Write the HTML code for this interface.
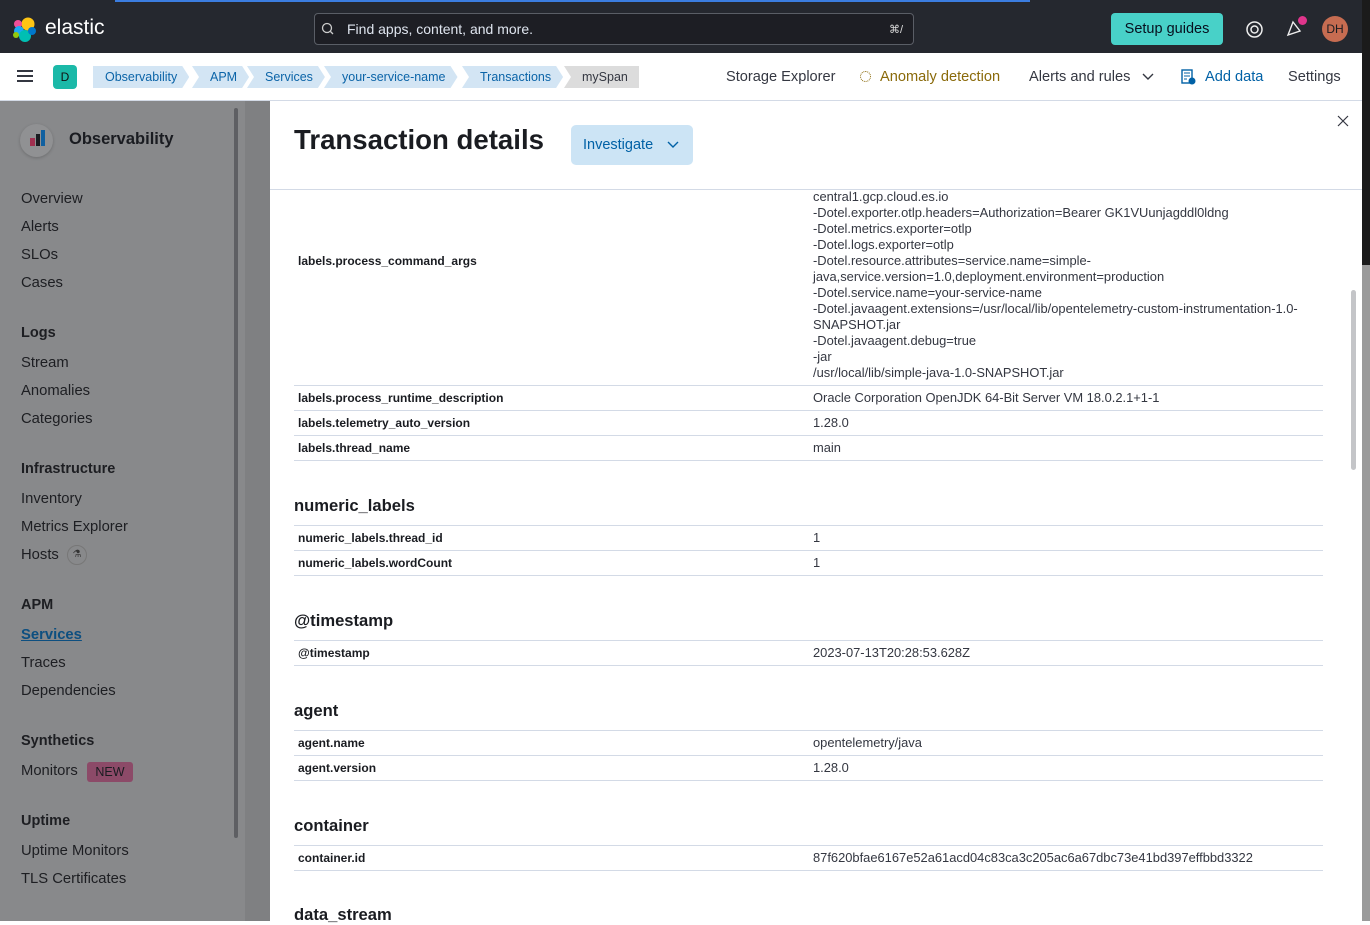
<!DOCTYPE html>
<html><head><meta charset="utf-8"><style>
*{box-sizing:border-box;margin:0;padding:0}
body{width:1370px;height:921px;overflow:hidden;position:relative;font-family:"Liberation Sans",sans-serif;background:#fff}
.a{position:absolute;white-space:nowrap}
.top{left:0;top:0;width:1362px;height:53px;background:#25282f}
.bc{position:absolute;top:66px;height:22px;line-height:22px;font-size:12.5px;color:#0b64a8;background:#d3e5f4;padding:0 12px 0 18px;clip-path:polygon(0 0,calc(100% - 7px) 0,100% 50%,calc(100% - 7px) 100%,0 100%,7px 50%)}
.side{left:0;top:101px;width:245px;height:820px;background:#88898b}
.si{position:absolute;left:21px;font-size:14.8px;color:#1d1e22}
.sh{position:absolute;left:21px;font-size:14.5px;font-weight:bold;color:#1d1e22}
.k{position:absolute;left:298px;font-size:12px;font-weight:bold;color:#1a1c21}
.v{position:absolute;left:813px;font-size:12.9px;color:#343741}
.ln{position:absolute;left:294px;width:1029px;height:1px;background:#d3dae6}
.h{position:absolute;left:294px;font-size:16.6px;font-weight:bold;color:#1a1c21}
.n{font-size:14.6px}
</style></head><body>
<div class="a top"></div>
<div class="a" style="left:115px;top:0;width:915px;height:2px;background:#3b7de0"></div>
<div class="a" style="left:1362px;top:0;width:8px;height:265px;background:#1b1b1b"></div>
<div class="a" style="left:1362px;top:265px;width:8px;height:656px;background:#9a9a9a"></div>
<svg class="a" style="left:12px;top:16px" width="26" height="26" viewBox="0 0 26 26"><circle cx="16" cy="8" r="6.5" fill="#fec514"/><circle cx="6" cy="8" r="4" fill="#f04e98"/><circle cx="7" cy="15" r="5" fill="#1ba9f5"/><circle cx="13" cy="20" r="6" fill="#00bfb3"/><circle cx="20" cy="15" r="4" fill="#0077cc"/><circle cx="4" cy="19" r="3" fill="#93c90e"/></svg>
<div class="a" style="left:45px;top:16px;font-size:21px;color:#fff">elastic</div>
<div class="a" style="left:314px;top:13px;width:600px;height:32px;border:1px solid #5a5e66;border-radius:4px;background:#1d1e24"></div>
<svg class="a" style="left:321px;top:22px" width="14" height="14" viewBox="0 0 14 14"><circle cx="6" cy="6" r="4.5" stroke="#ccc" stroke-width="1.3" fill="none"/><path d="M9.5 9.5L12 12" stroke="#ccc" stroke-width="1.3"/></svg>
<div class="a" style="left:347px;top:21px;font-size:14px;color:#dfe5ef">Find apps, content, and more.</div>
<div class="a" style="left:889px;top:23px;font-size:11px;color:#ddd">⌘/</div>
<div class="a" style="left:1111px;top:13px;width:112px;height:32px;background:#48d1c8;border-radius:4px;font-size:14.5px;color:#07101f;text-align:center;line-height:32px">Setup guides</div>
<svg class="a" style="left:1245px;top:20px" width="19" height="19" viewBox="0 0 19 19"><circle cx="9.5" cy="9.5" r="7.5" stroke="#eee" stroke-width="1.5" fill="none"/><circle cx="9.5" cy="9.5" r="3.5" stroke="#eee" stroke-width="1.5" fill="none"/></svg>
<svg class="a" style="left:1285px;top:19px" width="18" height="18" viewBox="0 0 18 18"><path d="M3 16L8 3l7 9z" stroke="#eee" stroke-width="1.4" fill="none"/></svg>
<div class="a" style="left:1298px;top:16px;width:9px;height:9px;border-radius:50%;background:#e0358c"></div>
<div class="a" style="left:1322px;top:16px;width:26px;height:26px;border-radius:50%;background:#c66c51;font-size:12px;color:#1a1c21;text-align:center;line-height:26px">DH</div>
<div class="a" style="left:0;top:53px;width:1362px;height:48px;background:#fff;border-bottom:1px solid #d3dae6"></div>
<div class="a" style="left:17px;top:70px;width:16px;height:2px;background:#343741;box-shadow:0 5px 0 #343741,0 10px 0 #343741"></div>
<div class="a" style="left:53px;top:65px;width:24px;height:24px;background:#1bb9a8;border-radius:4px;font-size:12px;text-align:center;line-height:24px;color:#111">D</div>
<div class="bc" style="left:93px;padding-left:12px;clip-path:polygon(0 0,calc(100% - 7px) 0,100% 50%,calc(100% - 7px) 100%,0 100%)">Observability</div>
<div class="bc" style="left:192px">APM</div>
<div class="bc" style="left:247px">Services</div>
<div class="bc" style="left:324px">your-service-name</div>
<div class="bc" style="left:462px">Transactions</div>
<div class="bc" style="left:564px;width:75px;background:#dcdcdc;color:#343741;clip-path:polygon(0 0,100% 0,100% 100%,0 100%,7px 50%)">mySpan</div>
<div class="a n" style="left:726px;top:69px;color:#343741">Storage Explorer</div>
<div class="a" style="left:860px;top:71px;width:11px;height:11px;border:1.5px dotted #8a6a0a;border-radius:50%"></div>
<div class="a n" style="left:880px;top:69px;color:#8a6a0a">Anomaly detection</div>
<div class="a n" style="left:1029px;top:69px;color:#343741">Alerts and rules</div>
<svg class="a" style="left:1141px;top:72px" width="14" height="10" viewBox="0 0 14 10"><path d="M2 2l5 5 5-5" stroke="#343741" stroke-width="1.4" fill="none"/></svg>
<svg class="a" style="left:1181px;top:69px" width="15" height="16" viewBox="0 0 15 16"><rect x="1" y="1" width="10" height="13" stroke="#0061a6" stroke-width="1.4" fill="none"/><path d="M3 4h6M3 7h6M3 10h3" stroke="#0061a6"/><circle cx="11" cy="12" r="3.5" fill="#0061a6"/></svg>
<div class="a n" style="left:1205px;top:69px;color:#0061a6">Add data</div>
<div class="a n" style="left:1288px;top:69px;color:#343741">Settings</div>
<div class="a side"></div>
<div class="a" style="left:245px;top:101px;width:25px;height:820px;background:#7f8082"></div>
<div class="a" style="left:234px;top:108px;width:4px;height:730px;background:#5e5f63;border-radius:2px"></div>
<div class="a" style="left:20px;top:124px;width:33px;height:33px;border-radius:50%;background:#909193;box-shadow:0 1px 3px rgba(0,0,0,.2)"></div>
<div class="a" style="left:30px;top:138px;width:5px;height:8px;background:#a03050"></div>
<div class="a" style="left:36px;top:134px;width:4px;height:12px;background:#1a1c21"></div>
<div class="a" style="left:41px;top:130px;width:4px;height:16px;background:#1060a0"></div>
<div class="a" style="left:69px;top:130px;font-size:16.5px;font-weight:bold;color:#1a1c21">Observability</div>
<div class="si" style="top:191px">Overview</div>
<div class="si" style="top:219px">Alerts</div>
<div class="si" style="top:247px">SLOs</div>
<div class="si" style="top:275px">Cases</div>
<div class="sh" style="top:325px">Logs</div>
<div class="si" style="top:355px">Stream</div>
<div class="si" style="top:383px">Anomalies</div>
<div class="si" style="top:411px">Categories</div>
<div class="sh" style="top:461px">Infrastructure</div>
<div class="si" style="top:491px">Inventory</div>
<div class="si" style="top:519px">Metrics Explorer</div>
<div class="si" style="top:547px">Hosts</div>
<div class="a" style="left:67px;top:545px;width:20px;height:20px;border:1px solid #777;border-radius:50%;font-size:10px;text-align:center;line-height:18px;color:#333">⚗</div>
<div class="sh" style="top:597px">APM</div>
<div class="si" style="top:627px;color:#0d4f80;font-weight:bold;text-decoration:underline">Services</div>
<div class="si" style="top:655px">Traces</div>
<div class="si" style="top:683px">Dependencies</div>
<div class="sh" style="top:733px">Synthetics</div>
<div class="si" style="top:763px">Monitors</div>
<div class="a" style="left:87px;top:762px;width:46px;height:20px;background:#8c4a68;border-radius:3px;font-size:12.5px;color:#1a1c21;text-align:center;line-height:20px">NEW</div>
<div class="sh" style="top:813px">Uptime</div>
<div class="si" style="top:843px">Uptime Monitors</div>
<div class="si" style="top:871px">TLS Certificates</div>
<div class="a" style="left:270px;top:101px;width:1092px;height:820px;background:#fff"></div>
<div class="a" style="left:294px;top:124px;font-size:27.6px;font-weight:bold;color:#1a1c21">Transaction details</div>
<div class="a" style="left:571px;top:125px;width:122px;height:40px;background:#cce4f5;border-radius:5px"></div>
<div class="a" style="left:583px;top:137px;font-size:14.5px;color:#0061a6">Investigate</div>
<svg class="a" style="left:666px;top:140px" width="14" height="10" viewBox="0 0 14 10"><path d="M2 2l5 5 5-5" stroke="#0061a6" stroke-width="1.4" fill="none"/></svg>
<svg class="a" style="left:1337px;top:115px" width="12" height="12" viewBox="0 0 12 12"><path d="M1 1l10 10M11 1L1 11" stroke="#343741" stroke-width="1.2"/></svg>
<div class="a" style="left:270px;top:189px;width:1092px;height:1px;background:#d3dae6"></div>
<div class="a" style="left:1351px;top:290px;width:5px;height:180px;background:#c4c5c8;border-radius:3px"></div>
<div class="v" style="top:189px;line-height:16px">central1.gcp.cloud.es.io<br>-Dotel.exporter.otlp.headers=Authorization=Bearer GK1VUunjagddl0ldng<br>-Dotel.metrics.exporter=otlp<br>-Dotel.logs.exporter=otlp<br>-Dotel.resource.attributes=service.name=simple-<br>java,service.version=1.0,deployment.environment=production<br>-Dotel.service.name=your-service-name<br>-Dotel.javaagent.extensions=/usr/local/lib/opentelemetry-custom-instrumentation-1.0-<br>SNAPSHOT.jar<br>-Dotel.javaagent.debug=true<br>-jar<br>/usr/local/lib/simple-java-1.0-SNAPSHOT.jar</div>
<div class="k" style="top:254px">labels.process_command_args</div>
<div class="ln" style="top:385px"></div>
<div class="k" style="top:391px">labels.process_runtime_description</div><div class="v" style="top:390px">Oracle Corporation OpenJDK 64-Bit Server VM 18.0.2.1+1-1</div>
<div class="ln" style="top:410px"></div>
<div class="k" style="top:416px">labels.telemetry_auto_version</div><div class="v" style="top:415px">1.28.0</div>
<div class="ln" style="top:435px"></div>
<div class="k" style="top:441px">labels.thread_name</div><div class="v" style="top:440px">main</div>
<div class="ln" style="top:460px"></div>
<div class="h" style="top:496px">numeric_labels</div>
<div class="ln" style="top:525px"></div>
<div class="k" style="top:531px">numeric_labels.thread_id</div><div class="v" style="top:530px">1</div>
<div class="ln" style="top:550px"></div>
<div class="k" style="top:556px">numeric_labels.wordCount</div><div class="v" style="top:555px">1</div>
<div class="ln" style="top:575px"></div>
<div class="h" style="top:611px">@timestamp</div>
<div class="ln" style="top:640px"></div>
<div class="k" style="top:646px">@timestamp</div><div class="v" style="top:645px">2023-07-13T20:28:53.628Z</div>
<div class="ln" style="top:665px"></div>
<div class="h" style="top:701px">agent</div>
<div class="ln" style="top:730px"></div>
<div class="k" style="top:736px">agent.name</div><div class="v" style="top:735px">opentelemetry/java</div>
<div class="ln" style="top:755px"></div>
<div class="k" style="top:761px">agent.version</div><div class="v" style="top:760px">1.28.0</div>
<div class="ln" style="top:780px"></div>
<div class="h" style="top:816px">container</div>
<div class="ln" style="top:845px"></div>
<div class="k" style="top:851px">container.id</div><div class="v" style="top:850px">87f620bfae6167e52a61acd04c83ca3c205ac6a67dbc73e41bd397effbbd3322</div>
<div class="ln" style="top:870px"></div>
<div class="h" style="top:905px">data_stream</div>
</body></html>
